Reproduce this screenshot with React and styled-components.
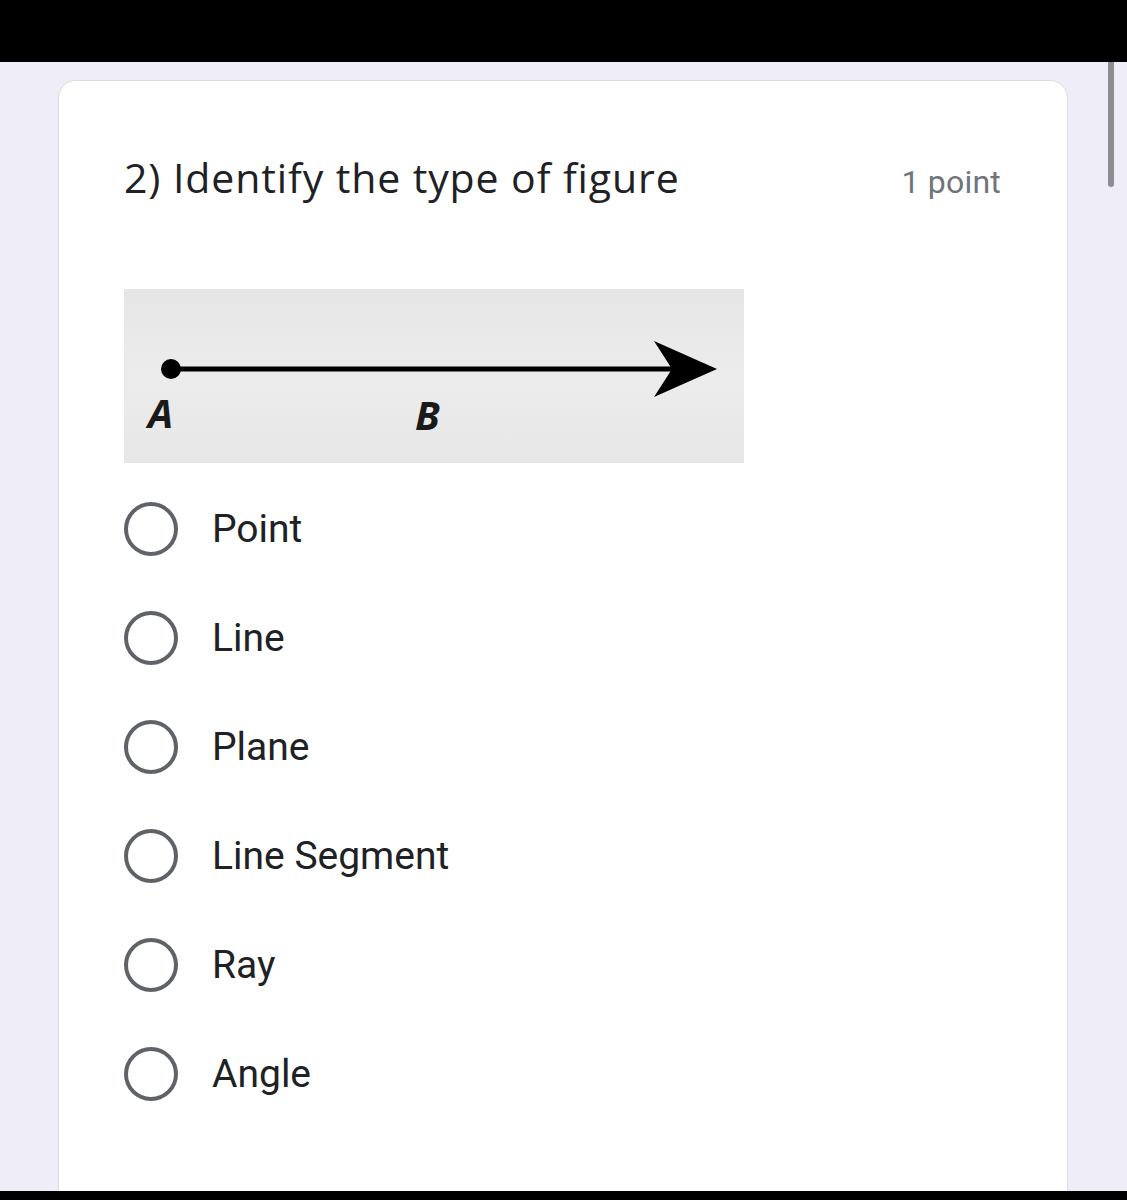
import React from "react";
import styled, { createGlobalStyle } from "styled-components";

const Global = createGlobalStyle`
  html, body { margin: 0; padding: 0; }
  body { background: #000; font-family: Roboto, "Noto Sans", sans-serif; }
`;

const Screen = styled.div`
  width: 1127px;
  height: 1200px;
  background: #000;
  display: flex;
  flex-direction: column;
  overflow: hidden;
`;

const TopBar = styled.div`
  height: 62px;
  flex: none;
  background: #000;
`;

const Page = styled.div`
  position: relative;
  height: 1129px;
  flex: none;
  background: #efedf8;
  padding: 18px 0 0 58px;
  box-sizing: border-box;
  overflow: hidden;
`;

const Scrollbar = styled.div`
  position: absolute;
  top: 0;
  left: 1108px;
  width: 6px;
  height: 125px;
  border-radius: 0 0 3px 3px;
  background: #8e8d94;
`;

const Card = styled.div`
  width: 1010px;
  height: 1200px;
  background: #fff;
  border: 1px solid #dadce0;
  border-radius: 18px;
  box-sizing: border-box;
  padding: 68px 66px 0 65px;
`;

const Header = styled.div`
  display: flex;
  align-items: baseline;
  justify-content: space-between;
`;

const Title = styled.div`
  font-family: "Open Sans", sans-serif;
  font-size: 41px;
  letter-spacing: 0.9px;
  color: #202124;
`;

const Points = styled.div`
  font-family: Roboto, sans-serif;
  font-size: 32px;
  letter-spacing: 0.2px;
  color: #70757a;
`;

const Figure = styled.div`
  margin-top: 84px;
  width: 620px;
  height: 174px;
  background: linear-gradient(180deg, #e6e6e6 0%, #ececec 50%, #e7e7e7 100%);
`;

const Options = styled.div`
  display: flex;
  flex-direction: column;
  margin-top: 39px;
  gap: 55px;
`;

const Option = styled.label`
  display: flex;
  align-items: center;
  height: 54px;
  gap: 34px;
`;

const Radio = styled.span`
  width: 54px;
  height: 54px;
  box-sizing: border-box;
  border: 4.5px solid #5f6368;
  border-radius: 50%;
  flex: none;
`;

const OptionText = styled.span`
  font-family: Roboto, sans-serif;
  font-size: 39px;
  color: #202124;
`;

const RayFigure = () => (
  <svg width="620" height="174" viewBox="0 0 620 174">
    <line x1="46" y1="80" x2="560" y2="80" stroke="#000" strokeWidth="5" />
    <circle cx="47" cy="80" r="10" fill="#000" />
    <path d="M530 52 L593 80 L530 108 L548 80 Z" fill="#000" />
    <text x="24" y="139" fontFamily="'Open Sans', sans-serif" fontWeight="700" fontStyle="italic" fontSize="40" fill="#1a1a1a">A</text>
    <text x="291" y="141" fontFamily="'Open Sans', sans-serif" fontWeight="700" fontStyle="italic" fontSize="40" fill="#1a1a1a">B</text>
  </svg>
);

const options = ["Point", "Line", "Plane", "Line Segment", "Ray", "Angle"];

export default function App() {
  return (
    <>
      <Global />
      <Screen>
        <TopBar />
        <Page>
          <Scrollbar />
          <Card>
            <Header>
              <Title>2) Identify the type of figure</Title>
              <Points>1 point</Points>
            </Header>
            <Figure>
              <RayFigure />
            </Figure>
            <Options>
              {options.map((o) => (
                <Option key={o}>
                  <Radio />
                  <OptionText>{o}</OptionText>
                </Option>
              ))}
            </Options>
          </Card>
        </Page>
      </Screen>
    </>
  );
}
